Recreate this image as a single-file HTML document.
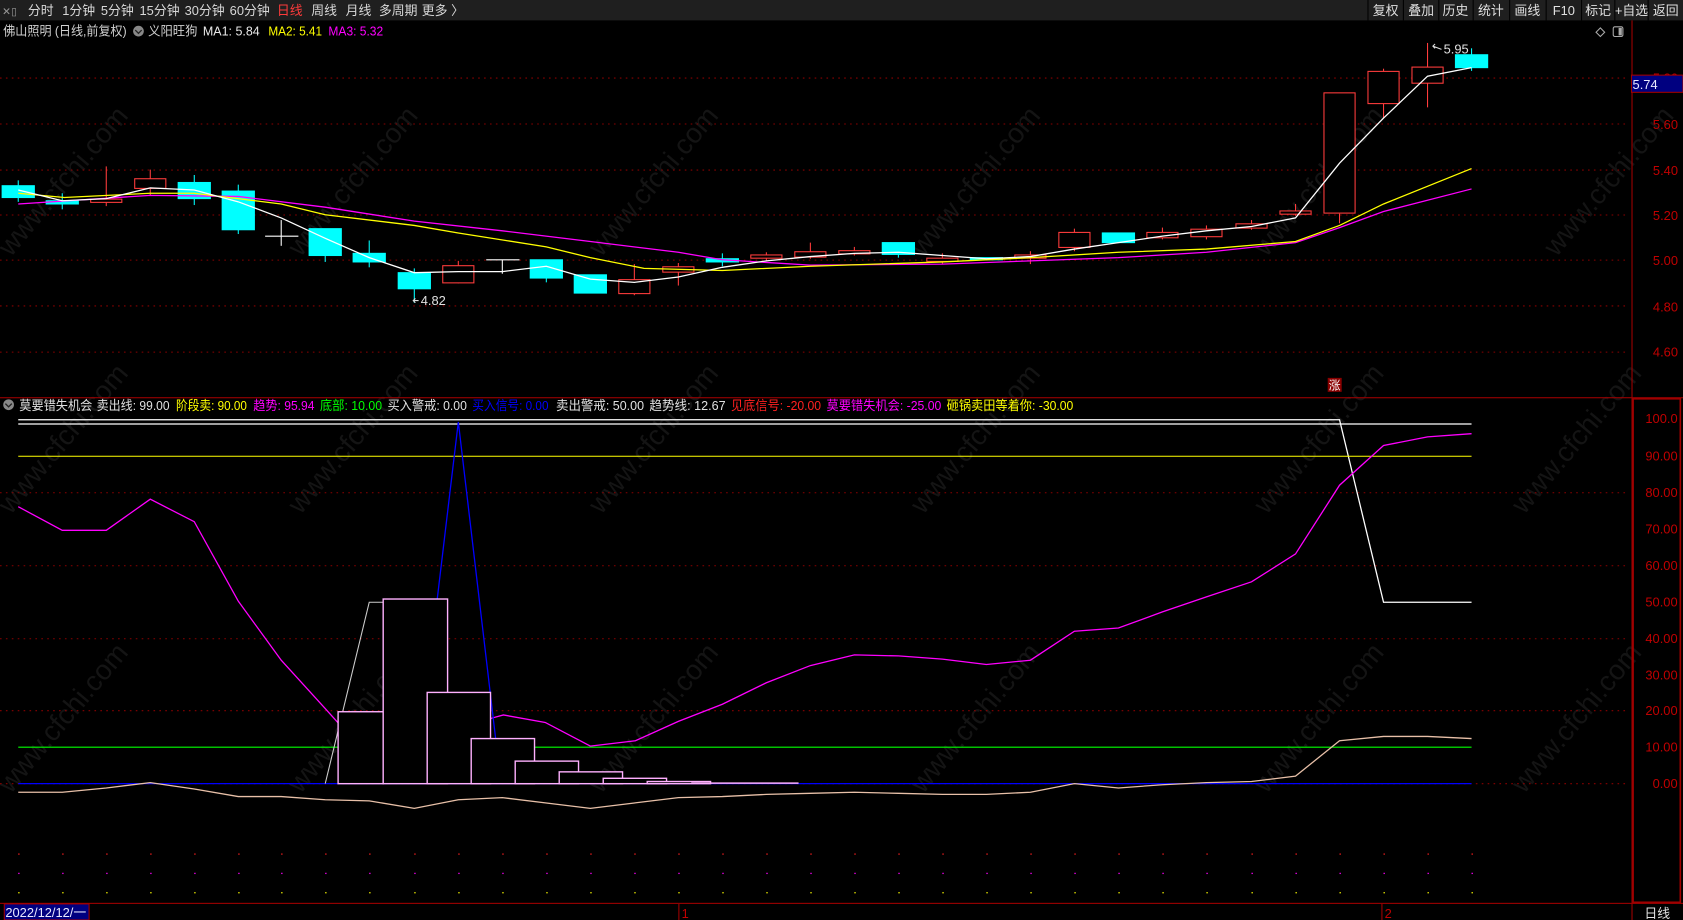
<!DOCTYPE html>
<html><head><meta charset="utf-8"><style>
html,body{margin:0;padding:0;background:#000;overflow:hidden}
svg{display:block}
text{font-family:"Liberation Sans","Noto Sans CJK SC",sans-serif}
</style></head><body>
<svg width="1683" height="920" viewBox="0 0 1568 857" preserveAspectRatio="none" xmlns="http://www.w3.org/2000/svg">
<rect width="1568" height="857" fill="#000"/>
<!-- watermarks -->
<g fill="#141414" font-size="26">
<text transform="translate(10,240) rotate(-50)">www.cfchi.com</text>
<text transform="translate(280,240) rotate(-50)">www.cfchi.com</text>
<text transform="translate(560,240) rotate(-50)">www.cfchi.com</text>
<text transform="translate(860,240) rotate(-50)">www.cfchi.com</text>
<text transform="translate(1180,240) rotate(-50)">www.cfchi.com</text>
<text transform="translate(1450,240) rotate(-50)">www.cfchi.com</text>
<text transform="translate(10,480) rotate(-50)">www.cfchi.com</text>
<text transform="translate(280,480) rotate(-50)">www.cfchi.com</text>
<text transform="translate(560,480) rotate(-50)">www.cfchi.com</text>
<text transform="translate(860,480) rotate(-50)">www.cfchi.com</text>
<text transform="translate(1180,480) rotate(-50)">www.cfchi.com</text>
<text transform="translate(1420,480) rotate(-50)">www.cfchi.com</text>
<text transform="translate(10,740) rotate(-50)">www.cfchi.com</text>
<text transform="translate(280,740) rotate(-50)">www.cfchi.com</text>
<text transform="translate(560,740) rotate(-50)">www.cfchi.com</text>
<text transform="translate(860,740) rotate(-50)">www.cfchi.com</text>
<text transform="translate(1180,740) rotate(-50)">www.cfchi.com</text>
<text transform="translate(1420,740) rotate(-50)">www.cfchi.com</text>
</g>
<!-- toolbar -->
<rect x="0" y="0" width="1568" height="19" fill="#1f1f1f"/>
<g fill="#d8d8d8" font-size="12">
<text x="2" y="14" font-size="10" fill="#999">✕▯</text>
<text x="26" y="14">分时</text><text x="58" y="14">1分钟</text><text x="94" y="14">5分钟</text>
<text x="130" y="14">15分钟</text><text x="172" y="14">30分钟</text><text x="214" y="14">60分钟</text>
<text x="258" y="14" fill="#ff3b3b">日线</text><text x="290" y="14">周线</text><text x="322" y="14">月线</text>
<text x="353" y="14">多周期</text><text x="393" y="14">更多 〉</text>
</g>
<g fill="#000"><rect x="1274" y="0" width="1" height="19"/><rect x="1307" y="0" width="1" height="19"/><rect x="1340" y="0" width="1" height="19"/><rect x="1372" y="0" width="1" height="19"/><rect x="1406" y="0" width="1" height="19"/><rect x="1440" y="0" width="1" height="19"/><rect x="1473" y="0" width="1" height="19"/><rect x="1504" y="0" width="1" height="19"/><rect x="1535" y="0" width="1" height="19"/></g>
<g fill="#e0e0e0" font-size="12" text-anchor="middle">
<text x="1291" y="14">复权</text><text x="1324" y="14">叠加</text><text x="1356" y="14">历史</text><text x="1389" y="14">统计</text><text x="1423" y="14">画线</text><text x="1457" y="14">F10</text><text x="1489" y="14">标记</text><text x="1520" y="14">+自选</text><text x="1552" y="14">返回</text>
</g>
<!-- title -->
<g font-size="12" lengthAdjust="spacingAndGlyphs">
<text x="3" y="33" fill="#d0d0d0" textLength="115" lengthAdjust="spacingAndGlyphs">佛山照明 (日线,前复权)</text>
<circle cx="129" cy="29" r="5" fill="#888"/><path d="M126 28l3 3 3-3" stroke="#222" fill="none" stroke-width="1.2"/>
<text x="138" y="33" fill="#d0d0d0" textLength="46" lengthAdjust="spacingAndGlyphs">义阳旺狗</text>
<text x="189" y="33" fill="#e8e8e8" textLength="53" lengthAdjust="spacingAndGlyphs">MA1: 5.84</text>
<text x="250" y="33" fill="#ffff00" textLength="50" lengthAdjust="spacingAndGlyphs">MA2: 5.41</text>
<text x="306" y="33" fill="#ff00ff" textLength="51" lengthAdjust="spacingAndGlyphs">MA3: 5.32</text>
</g>
<path d="M1491 26l4 4-4 4-4-4z" stroke="#aaa" fill="none"/>
<rect x="1503" y="25" width="9" height="9" rx="1.5" stroke="#aaa" fill="none"/><rect x="1508" y="26" width="3" height="7" fill="#aaa"/>
<!-- right axis lines -->
<rect x="1520" y="19" width="1" height="838" fill="#a00000"/>
<rect x="0" y="370" width="1568" height="1" fill="#a00000"/>
<rect x="0" y="841" width="1568" height="1" fill="#a00000"/>
<rect x="1521.5" y="371.5" width="44" height="469" fill="none" stroke="#a00000" stroke-width="1.5"/>
<!-- main grid -->
<g stroke="#8a0000" stroke-dasharray="1.5 4" stroke-width="1">
<line x1="0" y1="72.7" x2="1518" y2="72.7"/><line x1="0" y1="115.5" x2="1518" y2="115.5"/><line x1="0" y1="158.4" x2="1518" y2="158.4"/><line x1="0" y1="200.3" x2="1518" y2="200.3"/><line x1="0" y1="242.3" x2="1518" y2="242.3"/><line x1="0" y1="285" x2="1518" y2="285"/><line x1="0" y1="328" x2="1518" y2="328"/>
<line x1="0" y1="459" x2="1518" y2="459"/><line x1="0" y1="527" x2="1518" y2="527"/><line x1="0" y1="595" x2="1518" y2="595"/><line x1="0" y1="662" x2="1518" y2="662"/><line x1="0" y1="730" x2="1518" y2="730"/>
</g>
<g fill="#c00000" font-size="12">
<text x="1540" y="77">5.80</text>
<text x="1540" y="120">5.60</text><text x="1540" y="163">5.40</text><text x="1540" y="205">5.20</text><text x="1540" y="247">5.00</text><text x="1540" y="290">4.80</text><text x="1540" y="332">4.60</text>
</g>
<rect x="1520" y="70" width="48" height="16" fill="#000080" stroke="#a00000"/>
<text x="1521" y="83" fill="#e8e8ff" font-size="12">5.74</text>
<g fill="#c00000" font-size="12" text-anchor="end">
<text x="1563" y="394">100.0</text><text x="1563" y="429">90.00</text><text x="1563" y="463">80.00</text><text x="1563" y="497">70.00</text><text x="1563" y="531">60.00</text><text x="1563" y="565">50.00</text><text x="1563" y="599">40.00</text><text x="1563" y="633">30.00</text><text x="1563" y="666">20.00</text><text x="1563" y="700">10.00</text><text x="1563" y="734">0.00</text>
</g>
<!-- candles -->
<g stroke-width="1">
<g stroke="#00ffff" fill="#00ffff">
<line x1="17" y1="168" x2="17" y2="188"/><rect x="2" y="173" width="30" height="11"/>
<line x1="58" y1="180" x2="58" y2="195"/><rect x="43" y="187" width="30" height="3"/>
<line x1="181" y1="163" x2="181" y2="191"/><rect x="166" y="170" width="30" height="15"/>
<line x1="222" y1="172" x2="222" y2="218"/><rect x="207" y="178" width="30" height="36"/>
<line x1="303" y1="213" x2="303" y2="244"/><rect x="288" y="213" width="30" height="25"/>
<line x1="344" y1="224" x2="344" y2="249"/><rect x="329" y="236" width="30" height="8"/>
<line x1="386" y1="250" x2="386" y2="282"/><rect x="371" y="254" width="30" height="15"/>
<rect x="494" y="242" width="30" height="17"/><line x1="509" y1="259" x2="509" y2="263"/>
<rect x="535" y="256" width="30" height="17"/>
<line x1="673" y1="236" x2="673" y2="248"/><rect x="658" y="241" width="30" height="3"/>
<rect x="822" y="226" width="30" height="11"/><line x1="837" y1="237" x2="837" y2="240"/>
<rect x="904" y="240" width="30" height="2"/>
<rect x="1027" y="217" width="30" height="9"/>
<line x1="1371" y1="45" x2="1371" y2="66"/><rect x="1356" y="51" width="30" height="12"/>
</g>
<g stroke="#ff3c3c" fill="#000">
<line x1="99" y1="155" x2="99" y2="192"/><rect x="84.5" y="185.5" width="29" height="3"/>
<line x1="140" y1="158" x2="140" y2="182"/><rect x="125.5" y="166.5" width="29" height="9"/>
<line x1="427" y1="243" x2="427" y2="264"/><rect x="412.5" y="247.5" width="29" height="16"/>
<line x1="591" y1="246" x2="591" y2="275"/><rect x="576.5" y="260.5" width="29" height="13"/>
<line x1="632" y1="245" x2="632" y2="266"/><rect x="617.5" y="248.5" width="29" height="5"/>
<line x1="714" y1="235" x2="714" y2="243"/><rect x="699.5" y="237.5" width="29" height="3"/>
<line x1="755" y1="226" x2="755" y2="241"/><rect x="740.5" y="234.5" width="29" height="5"/>
<line x1="796" y1="230" x2="796" y2="238"/><rect x="781.5" y="233.5" width="29" height="3"/>
<line x1="878" y1="236" x2="878" y2="246"/><rect x="863.5" y="240.5" width="29" height="3"/>
<line x1="960" y1="234" x2="960" y2="246"/><rect x="945.5" y="237.5" width="29" height="3"/>
<line x1="1001" y1="213" x2="1001" y2="234"/><rect x="986.5" y="216.5" width="29" height="14"/>
<line x1="1083" y1="212" x2="1083" y2="223"/><rect x="1068.5" y="216.5" width="29" height="5"/>
<line x1="1124" y1="210" x2="1124" y2="223"/><rect x="1109.5" y="213.5" width="29" height="7"/>
<line x1="1166" y1="205" x2="1166" y2="214"/><rect x="1151.5" y="208.5" width="29" height="4"/>
<line x1="1207" y1="190" x2="1207" y2="201"/><rect x="1192.5" y="196.5" width="29" height="3"/>
<line x1="1248" y1="199" x2="1248" y2="208"/><rect x="1233.5" y="86.5" width="29" height="112"/>
<line x1="1289" y1="64" x2="1289" y2="110"/><rect x="1274.5" y="66.5" width="29" height="30"/>
<line x1="1330" y1="40" x2="1330" y2="100"/><rect x="1315.5" y="62.5" width="29" height="15"/>
</g>
<g stroke="#fff"><line x1="262" y1="205" x2="262" y2="229"/><line x1="247" y1="220" x2="278" y2="220"/>
<line x1="468" y1="242" x2="468" y2="255"/><line x1="453" y1="242" x2="484" y2="242"/></g>
</g>
<!-- MAs -->
<polyline fill="none" stroke="#ff00ff" stroke-width="1.2" points="17,190 140,182 222,183 303,193 386,206 468,215 550,225 632,235 673,242 755,247 878,246 960,243 1042,240 1124,235 1207,226 1248,212 1289,197 1371,176"/>
<polyline fill="none" stroke="#ffff00" stroke-width="1.2" points="17,180 60,184 140,180 181,180 262,190 303,200 386,210 427,217 509,230 550,240 600,250 673,252 755,248 878,244 960,240 1042,235 1124,232 1207,225 1248,210 1289,190 1371,157"/>
<polyline fill="none" stroke="#ffffff" stroke-width="1.2" points="17,177 58,187 99,185 140,175 181,177 222,188 262,203 303,222 344,240 386,254 427,253 468,253 509,248 550,260 591,263 632,258 673,249 714,243 755,239 796,236 837,235 878,238 919,241 960,239 1001,232 1042,226 1083,220 1124,215 1166,211 1207,203 1248,152 1289,110 1330,71 1371,63"/>
<g font-size="12" fill="#e0e0e0"><text x="392" y="284">4.82</text><path d="M390 280h-5m2-2l-2 2 2 2" stroke="#ddd" fill="none"/>
<text x="1345" y="50">5.95</text><path d="M1343 46l-8-3m2-2l-2 2 2 2" stroke="#ddd" fill="none"/></g>
<rect x="1237" y="352" width="13" height="13" fill="#8a0000"/><text x="1238" y="363" font-size="11" fill="#fff">涨</text>
<!-- indicator header -->
<g font-size="12">
<circle cx="8" cy="377" r="5" fill="#888"/><path d="M5 376l3 3 3-3" stroke="#222" fill="none" stroke-width="1.2"/>
<text x="18" y="382" fill="#e0e0e0" textLength="68" lengthAdjust="spacingAndGlyphs">莫要错失机会</text>
<text x="90" y="382" fill="#e0e0e0" textLength="68" lengthAdjust="spacingAndGlyphs">卖出线: 99.00</text>
<text x="164" y="382" fill="#ffff00" textLength="66" lengthAdjust="spacingAndGlyphs">阶段卖: 90.00</text>
<text x="236" y="382" fill="#ff00ff" textLength="57" lengthAdjust="spacingAndGlyphs">趋势: 95.94</text>
<text x="298" y="382" fill="#00ff00" textLength="58" lengthAdjust="spacingAndGlyphs">底部: 10.00</text>
<text x="361" y="382" fill="#e0e0e0" textLength="74" lengthAdjust="spacingAndGlyphs">买入警戒: 0.00</text>
<text x="440" y="382" fill="#0000ff" textLength="71" lengthAdjust="spacingAndGlyphs">买入信号: 0.00</text>
<text x="518" y="382" fill="#e0e0e0" textLength="82" lengthAdjust="spacingAndGlyphs">卖出警戒: 50.00</text>
<text x="605" y="382" fill="#e0e0e0" textLength="71" lengthAdjust="spacingAndGlyphs">趋势线: 12.67</text>
<text x="681" y="382" fill="#ff2020" textLength="84" lengthAdjust="spacingAndGlyphs">见底信号: -20.00</text>
<text x="770" y="382" fill="#ff00ff" textLength="107" lengthAdjust="spacingAndGlyphs">莫要错失机会: -25.00</text>
<text x="882" y="382" fill="#ffff00" textLength="118" lengthAdjust="spacingAndGlyphs">砸锅卖田等着你: -30.00</text>
</g>
<!-- lower indicator -->
<line x1="17" y1="395" x2="1371" y2="395" stroke="#fff" stroke-width="1.2"/>
<polyline fill="none" stroke="#fff" stroke-width="1.2" points="17,391 1248,391 1289,561 1371,561"/>
<line x1="17" y1="425" x2="1371" y2="425" stroke="#ffff00"/>
<line x1="17" y1="696" x2="1371" y2="696" stroke="#00ff00"/>
<line x1="17" y1="730" x2="1371" y2="730" stroke="#0000ff" stroke-width="1.2"/>
<polyline fill="none" stroke="#ff00ff" stroke-width="1.2" points="17,472 58,494 99,494 140,465 181,486 222,560 262,615 303,660 330,690 344,700 420,690 458,669 469,666 508,673 550,695 592,690 632,672 673,656 714,636 755,620 796,610 837,611 878,614 919,619 960,615 1001,588 1042,585 1083,570 1124,556 1166,542 1207,516 1248,452 1289,415 1330,407 1371,404"/>
<polyline fill="none" stroke="#ccc" stroke-width="1" points="303,730 344,561 360,561"/>
<polyline fill="none" stroke="#0000ff" stroke-width="1.2" points="407,561 427,393 462,690"/>
<g stroke="#ffb0ff" stroke-width="1.3" fill="#000">
<rect x="315" y="663" width="42" height="67"/>
<rect x="357" y="558" width="60" height="172"/>
<rect x="398" y="645" width="59" height="85"/>
<rect x="439" y="688" width="59" height="42"/>
<rect x="480" y="709" width="59" height="21"/>
<rect x="521" y="719" width="59" height="11"/>
<rect x="562" y="725" width="59" height="5"/>
<rect x="603" y="728" width="59" height="2"/>
<line x1="644" y1="729.5" x2="744" y2="729.5"/>
</g>
<polyline fill="none" stroke="#e8c0a8" stroke-width="1.2" points="17,738 58,738 99,734 140,729 181,735 222,742 262,742 303,745 344,746 386,753 427,745 468,743 509,748 550,753 591,748 632,743 673,742 714,740 755,739 796,738 837,739 878,740 919,740 960,738 1001,730 1042,734 1083,731 1124,729 1166,728 1207,723 1248,690 1289,686 1330,686 1371,688"/>
<!-- dots -->
<defs><g id="dots"><rect x="17" y="0" width="1.2" height="1.2"/><rect x="58" y="0" width="1.2" height="1.2"/><rect x="99" y="0" width="1.2" height="1.2"/><rect x="140" y="0" width="1.2" height="1.2"/><rect x="181" y="0" width="1.2" height="1.2"/><rect x="222" y="0" width="1.2" height="1.2"/><rect x="262" y="0" width="1.2" height="1.2"/><rect x="303" y="0" width="1.2" height="1.2"/><rect x="344" y="0" width="1.2" height="1.2"/><rect x="386" y="0" width="1.2" height="1.2"/><rect x="427" y="0" width="1.2" height="1.2"/><rect x="468" y="0" width="1.2" height="1.2"/><rect x="509" y="0" width="1.2" height="1.2"/><rect x="550" y="0" width="1.2" height="1.2"/><rect x="591" y="0" width="1.2" height="1.2"/><rect x="632" y="0" width="1.2" height="1.2"/><rect x="673" y="0" width="1.2" height="1.2"/><rect x="714" y="0" width="1.2" height="1.2"/><rect x="755" y="0" width="1.2" height="1.2"/><rect x="796" y="0" width="1.2" height="1.2"/><rect x="837" y="0" width="1.2" height="1.2"/><rect x="878" y="0" width="1.2" height="1.2"/><rect x="919" y="0" width="1.2" height="1.2"/><rect x="960" y="0" width="1.2" height="1.2"/><rect x="1001" y="0" width="1.2" height="1.2"/><rect x="1042" y="0" width="1.2" height="1.2"/><rect x="1083" y="0" width="1.2" height="1.2"/><rect x="1124" y="0" width="1.2" height="1.2"/><rect x="1166" y="0" width="1.2" height="1.2"/><rect x="1207" y="0" width="1.2" height="1.2"/><rect x="1248" y="0" width="1.2" height="1.2"/><rect x="1289" y="0" width="1.2" height="1.2"/><rect x="1330" y="0" width="1.2" height="1.2"/><rect x="1371" y="0" width="1.2" height="1.2"/></g></defs>
<use href="#dots" y="795" fill="#ff2020"/>
<use href="#dots" y="813" fill="#ff00ff"/>
<use href="#dots" y="831" fill="#ffff00"/>
<!-- bottom bar -->
<rect x="4" y="842" width="79" height="15" fill="#000080" stroke="#a00000"/>
<text x="5" y="854" fill="#e8e8ff" font-size="12">2022/12/12/一</text>
<rect x="632" y="842" width="1" height="15" fill="#a00000"/><text x="635" y="855" fill="#c00000" font-size="12">1</text>
<rect x="1287" y="842" width="1" height="15" fill="#a00000"/><text x="1290" y="855" fill="#c00000" font-size="12">2</text>
<text x="1532" y="855" fill="#e0e0e0" font-size="12">日线</text>
</svg>
</body></html>
